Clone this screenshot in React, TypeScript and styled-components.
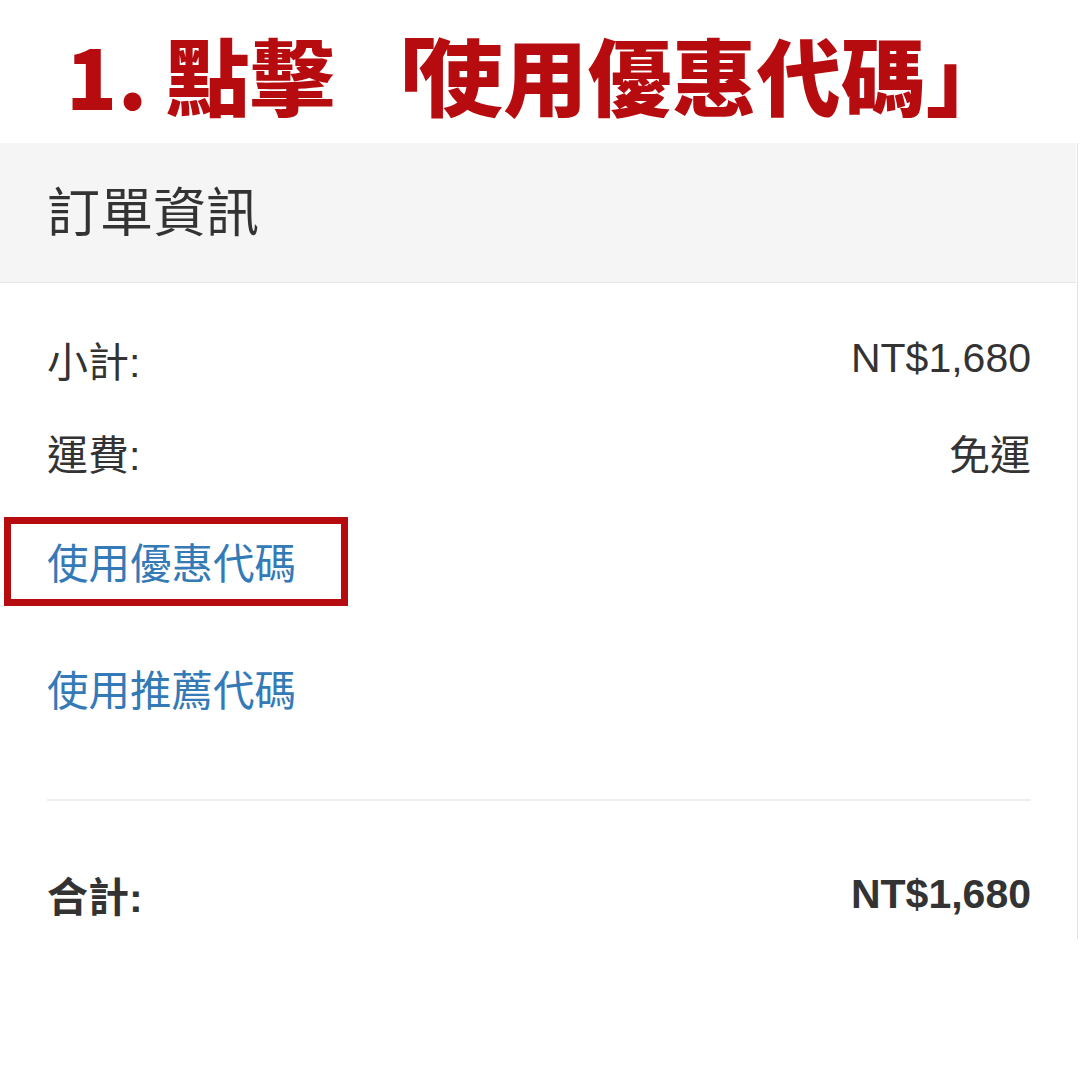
import React from "react";
import styled, { createGlobalStyle } from "styled-components";

const Global = createGlobalStyle`
  html, body { margin: 0; padding: 0; background: #fff; }
  body { font-family: "Liberation Sans", "Noto Sans CJK TC", sans-serif; color: #333; }
`;

const Page = styled.div`
  width: 1080px;
  height: 1080px;
  background: #fff;
  display: flex;
  flex-direction: column;
  overflow: hidden;
`;

const Title = styled.h1`
  margin: 0;
  height: 143px;
  padding-left: 66px;
  padding-top: 4px;
  box-sizing: border-box;
  display: flex;
  align-items: center;
  font-family: "Noto Sans CJK TC", sans-serif;
  font-weight: 900;
  font-size: 84px;
  line-height: 1;
  color: #b60c10;
  white-space: nowrap;
  letter-spacing: 0.5px;
`;

const Num = styled.span`
  margin-right: 18px;
`;

const Bracket = styled.span`
  margin-left: 17px;
  letter-spacing: -17px;
`;

const Panel = styled.section`
  width: 1078px;
  box-sizing: border-box;
  border-right: 1px solid #e3e3e3;
  display: flex;
  flex-direction: column;
`;

const Header = styled.div`
  height: 140px;
  box-sizing: border-box;
  padding: 0 0 8px 47px;
  background: #f5f5f5;
  border-bottom: 1px solid #e6e6e6;
  display: flex;
  align-items: center;
  font-family: "Noto Sans CJK TC", sans-serif;
  font-size: 53px;
  color: #333;
  margin-right: 1px;
`;

const Body = styled.div`
  padding: 29px 46px 0 47px;
  display: flex;
  flex-direction: column;
`;

const Row = styled.div<{ $bold?: boolean }>`
  height: 93px;
  display: flex;
  align-items: center;
  justify-content: space-between;
  font-size: 41px;
  font-weight: ${(p) => (p.$bold ? 700 : 400)};
  color: #333;
`;

const LinkRow = styled.div<{ $h: number }>`
  position: relative;
  height: ${(p) => p.$h}px;
  display: flex;
  align-items: center;
`;

const Link = styled.a`
  font-family: "Noto Sans CJK TC", sans-serif;
  font-size: 41.5px;
  color: #337ab7;
  text-decoration: none;
`;

const Highlight = styled.div`
  position: absolute;
  left: -43px;
  top: 19px;
  width: 344px;
  height: 89px;
  box-sizing: border-box;
  border: 7px solid #b60c10;
  pointer-events: none;
`;

const Divider = styled.hr`
  margin: 47px 0 0;
  border: none;
  border-top: 2px solid #eeeeee;
  height: 0;
`;

const TotalRow = styled(Row)`
  margin-top: 48px;
  height: 90px;
`;

export default function App() {
  return (
    <Page>
      <Global />
      <Title>
        <Num>1.</Num>點擊<Bracket>「</Bracket>使用優惠代碼」
      </Title>
      <Panel>
        <Header>訂單資訊</Header>
        <Body>
          <Row>
            <span>小計:</span>
            <span>NT$1,680</span>
          </Row>
          <Row>
            <span>運費:</span>
            <span>免運</span>
          </Row>
          <LinkRow $h={126}>
            <Link href="#">使用優惠代碼</Link>
            <Highlight />
          </LinkRow>
          <LinkRow $h={128}>
            <Link href="#">使用推薦代碼</Link>
          </LinkRow>
          <Divider />
          <TotalRow $bold>
            <span>合計:</span>
            <span>NT$1,680</span>
          </TotalRow>
        </Body>
      </Panel>
    </Page>
  );
}
